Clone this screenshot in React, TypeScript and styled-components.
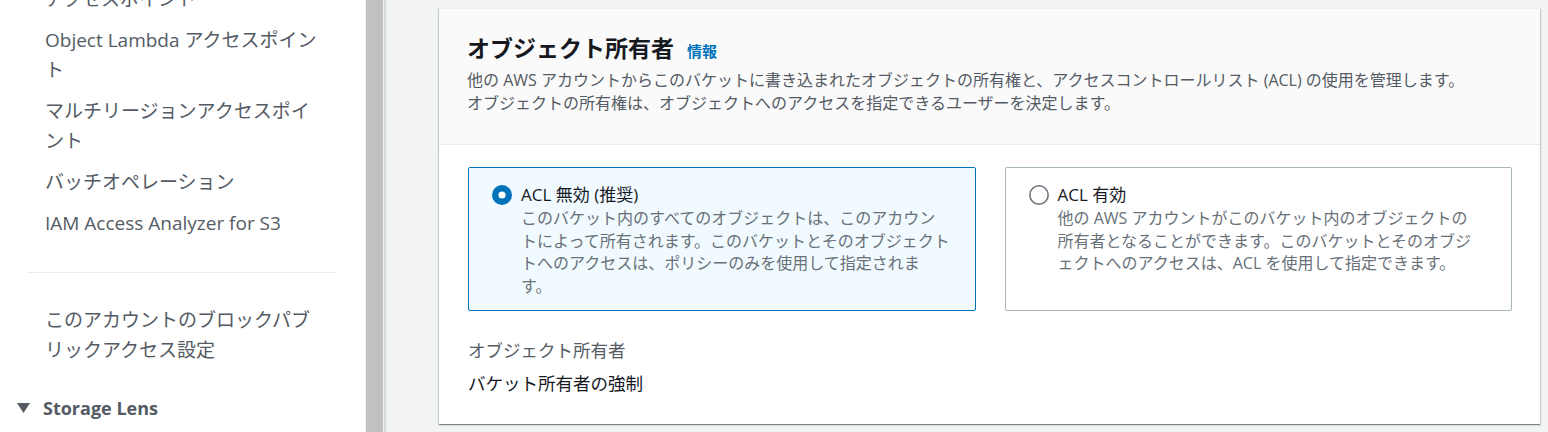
import React from 'react'
import styled, { createGlobalStyle } from 'styled-components'

const GlobalStyle = createGlobalStyle`
  html, body {
    margin: 0;
    padding: 0;
    height: 100%;
    overflow: hidden;
  }
  body {
    font-family: "Open Sans", "Noto Sans CJK JP", sans-serif;
    background: #f2f3f3;
  }
`

const navTop = [
  'アクセスポイント',
  'Object Lambda アクセスポイント',
  'マルチリージョンアクセスポイント',
  'バッチオペレーション',
  'IAM Access Analyzer for S3',
]

const options = [
  {
    title: 'ACL 無効 (推奨)',
    lines: [
      'このバケット内のすべてのオブジェクトは、このアカウン',
      'トによって所有されます。このバケットとそのオブジェクト',
      'トへのアクセスは、ポリシーのみを使用して指定されま',
      'す。',
    ],
    selected: true,
  },
  {
    title: 'ACL 有効',
    lines: [
      '他の AWS アカウントがこのバケット内のオブジェクトの',
      '所有者となることができます。このバケットとそのオブジ',
      'ェクトへのアクセスは、ACL を使用して指定できます。',
    ],
    selected: false,
  },
]

const RadioIcon = ({ checked }: { checked: boolean }) => (
  <RadioSvg width="20" height="20" viewBox="0 0 20 20">
    {checked ? (
      <>
        <circle cx="10" cy="10" r="10" fill="#0073bb" />
        <circle cx="10" cy="10" r="3.6" fill="#fff" />
      </>
    ) : (
      <circle cx="10" cy="10" r="9.2" fill="#fff" stroke="#687078" strokeWidth="1.5" />
    )}
  </RadioSvg>
)

const App = () => {
  return (
    <Page>
      <GlobalStyle />
      <Sidebar>
        <NavGroup $pull>
          {navTop.map((item) => (
            <NavItem key={item}>{item}</NavItem>
          ))}
        </NavGroup>
        <Divider />
        <NavGroup>
          <NavItem>このアカウントのブロックパブリックアクセス設定</NavItem>
        </NavGroup>
        <SectionToggle>
          <svg width="13" height="10" viewBox="0 0 13 10">
            <polygon points="0,0 13,0 6.5,10" fill="#545b64" />
          </svg>
          Storage Lens
        </SectionToggle>
      </Sidebar>
      <ScrollRail>
        <ScrollThumb />
      </ScrollRail>
      <Main>
        <Card>
          <CardHeader>
            <Title>
              オブジェクト所有者
              <InfoLink href="#">情報</InfoLink>
            </Title>
            <Description>
              他の AWS アカウントからこのバケットに書き込まれたオブジェクトの所有権と、アクセスコントロールリスト (ACL) の使用を管理します。
              <br />
              オブジェクトの所有権は、オブジェクトへのアクセスを指定できるユーザーを決定します。
            </Description>
          </CardHeader>
          <CardBody>
            <OptionGrid>
              {options.map((opt) => (
                <OptionCard key={opt.title} $selected={opt.selected}>
                  <RadioIcon checked={opt.selected} />
                  <OptionText>
                    <OptionTitle>{opt.title}</OptionTitle>
                    <OptionDesc>
                      {opt.lines.map((line, i) => (
                        <React.Fragment key={i}>
                          {line}
                          {i < opt.lines.length - 1 && <br />}
                        </React.Fragment>
                      ))}
                    </OptionDesc>
                  </OptionText>
                </OptionCard>
              ))}
            </OptionGrid>
            <Summary>
              <SummaryLabel>オブジェクト所有者</SummaryLabel>
              <SummaryValue>バケット所有者の強制</SummaryValue>
            </Summary>
          </CardBody>
        </Card>
      </Main>
    </Page>
  )
}

export default App

const Page = styled.div`
  display: flex;
  height: 432px;
  overflow: hidden;
`

const Sidebar = styled.nav`
  width: 365px;
  flex: none;
  background: #fff;
  overflow: hidden;
`

const NavGroup = styled.ul<{ $pull?: boolean }>`
  list-style: none;
  margin: ${(p) => (p.$pull ? '-21.5px' : '0')} 0 0;
  padding: 0 40px 0 45px;
`

const NavItem = styled.li`
  font-size: 19px;
  line-height: 30px;
  padding: 5.5px 0;
  color: #545b64;
`

const Divider = styled.hr`
  border: none;
  height: 1px;
  background: #eaeded;
  margin: 28.5px 28px 26.5px 28px;
`

const SectionToggle = styled.div`
  display: flex;
  align-items: center;
  gap: 13px;
  margin-top: 22.5px;
  padding-left: 17px;
  font-size: 18px;
  font-weight: 700;
  line-height: 30px;
  color: #545b64;
`

const ScrollRail = styled.div`
  width: 19px;
  flex: none;
  padding: 0 1px;
  box-sizing: border-box;
  background: #f1f1f1;
`

const ScrollThumb = styled.div`
  height: 100%;
  background: #c1c1c1;
`

const Main = styled.main`
  flex: 1;
  min-width: 0;
  border-left: 2px solid #d5dbdb;
  padding: 8px 8px 8px 53px;
`

const Card = styled.section`
  background: #fff;
  border-top: 1px solid #eaeded;
  box-shadow: 0 1px 1px 0 rgba(0, 28, 36, 0.3), 1px 1px 1px 0 rgba(0, 28, 36, 0.15),
    -1px 1px 1px 0 rgba(0, 28, 36, 0.15);
`

const CardHeader = styled.header`
  background: #fafafa;
  padding: 24px 28px 29px;
  border-bottom: 1px solid #eaeded;
`

const Title = styled.h2`
  margin: 0;
  font-size: 23px;
  line-height: 30px;
  font-weight: 700;
  color: #16191f;
`

const InfoLink = styled.a`
  margin-left: 13px;
  font-size: 15px;
  font-weight: 700;
  color: #0073bb;
  text-decoration: none;
`

const Description = styled.p`
  margin: 3px 0 0;
  font-size: 16px;
  line-height: 23px;
  color: #545b64;
`

const CardBody = styled.div`
  padding: 22px 28px 29px 29px;
`

const OptionGrid = styled.div`
  display: grid;
  grid-template-columns: 1fr 1fr;
  gap: 29px;
`

const OptionCard = styled.label<{ $selected: boolean }>`
  display: flex;
  align-items: flex-start;
  gap: 9px;
  padding: 15px 12px 13px 23px;
  border: 1px solid ${(p) => (p.$selected ? '#0073bb' : '#aab7b8')};
  border-radius: 2px;
  background: ${(p) => (p.$selected ? '#f1faff' : '#fff')};
  cursor: pointer;
`

const RadioSvg = styled.svg`
  flex: none;
  margin-top: 2px;
`

const OptionText = styled.div`
  min-width: 0;
`

const OptionTitle = styled.div`
  font-size: 17px;
  line-height: 24px;
  color: #16191f;
`

const OptionDesc = styled.div`
  font-size: 16px;
  line-height: 22.5px;
  color: #687078;
  white-space: nowrap;
`

const Summary = styled.div`
  margin-top: 27px;
`

const SummaryLabel = styled.div`
  font-size: 17.5px;
  line-height: 24px;
  color: #545b64;
`

const SummaryValue = styled.div`
  margin-top: 9px;
  font-size: 17.5px;
  line-height: 24px;
  color: #16191f;
`
